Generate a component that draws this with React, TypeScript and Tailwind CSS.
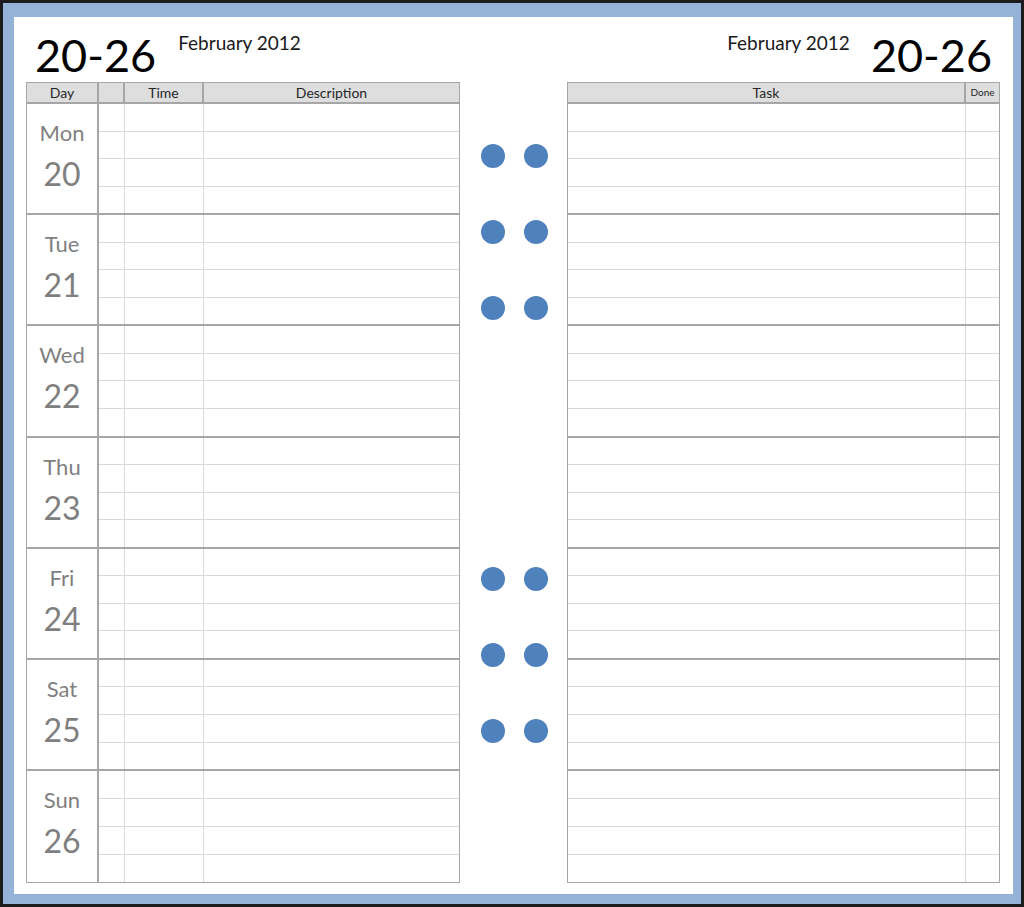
import React from 'react';

const days = [
  { name: 'Mon', num: '20' },
  { name: 'Tue', num: '21' },
  { name: 'Wed', num: '22' },
  { name: 'Thu', num: '23' },
  { name: 'Fri', num: '24' },
  { name: 'Sat', num: '25' },
  { name: 'Sun', num: '26' },
];

const font = { fontFamily: 'Lato, "Liberation Sans", sans-serif' };

function SubRows({ cols }: { cols: string }) {
  // 4 light lines per day block
  return (
    <div className="flex h-full flex-col">
      {[0, 1, 2, 3].map((i) => (
        <div
          key={i}
          className={`grid flex-1 ${cols} ${i < 3 ? 'border-b border-[#d9d9d9]' : ''}`}
        >
          <div className="border-r border-[#d9d9d9]" />
          <div className="border-r border-[#d9d9d9]" />
          <div />
        </div>
      ))}
    </div>
  );
}

function DayTable() {
  return (
    <div className="w-[434px] border border-[#a6a6a6]">
      <div className="grid h-[21px] grid-cols-[72px_26px_79px_1fr] border-b-2 border-[#a6a6a6] bg-[#dedede] text-[14px] leading-[19px] text-[#262626]">
        <div className="border-r-2 border-[#a6a6a6] text-center">Day</div>
        <div className="border-r-2 border-[#a6a6a6]" />
        <div className="border-r-2 border-[#a6a6a6] text-center">Time</div>
        <div className="text-center">Description</div>
      </div>
      {days.map((d, i) => (
        <div
          key={d.name}
          className={`flex h-[111.2px] ${i < days.length - 1 ? 'border-b-2 border-[#a6a6a6]' : ''}`}
        >
          <div className="flex w-[72px] flex-col items-center border-r-2 border-[#a6a6a6] pt-[16px] text-[#7f7f7f]">
            <div className="text-[22px] leading-[26px]">{d.name}</div>
            <div className="mt-[10px] text-[32px] leading-[36px]">{d.num}</div>
          </div>
          <div className="flex-1">
            <SubRows cols="grid-cols-[26px_79px_1fr]" />
          </div>
        </div>
      ))}
    </div>
  );
}

function TaskTable() {
  return (
    <div className="w-[433px] border border-[#a6a6a6]">
      <div className="grid h-[21px] grid-cols-[1fr_33px] border-b-2 border-[#a6a6a6] bg-[#dedede] leading-[19px] text-[#262626]">
        <div className="border-r-2 border-[#a6a6a6] text-center text-[14px]">Task</div>
        <div className="text-center text-[10px]">Done</div>
      </div>
      {days.map((d, i) => (
        <div
          key={d.name}
          className={`h-[111.2px] ${i < days.length - 1 ? 'border-b-2 border-[#a6a6a6]' : ''}`}
        >
          <div className="flex h-full flex-col">
            {[0, 1, 2, 3].map((j) => (
              <div
                key={j}
                className={`grid flex-1 grid-cols-[1fr_33px] ${j < 3 ? 'border-b border-[#d9d9d9]' : ''}`}
              >
                <div className="border-r border-[#d9d9d9]" />
                <div />
              </div>
            ))}
          </div>
        </div>
      ))}
    </div>
  );
}

function Dots() {
  return (
    <div className="flex gap-[19px]">
      <div className="h-[24px] w-[24px] rounded-full bg-[#4f81bd]" />
      <div className="h-[24px] w-[24px] rounded-full bg-[#4f81bd]" />
    </div>
  );
}

export default function App() {
  return (
    <div className="h-[907px] w-[1024px] bg-[#1c1c1c] p-[3px]" style={font}>
      <div className="h-full w-full bg-[#95b3d7] pb-[10px] pl-[11px] pr-[8px] pt-[14px]">
        <div className="h-full w-full bg-white pl-[12px] pr-[10px] pt-[16px]">
          <div className="flex h-[49px] items-start justify-between">
            <div className="flex items-start">
              <span className="ml-[9px] text-[45px] leading-[45px] text-black">20-26</span>
              <span className="ml-[22px] mt-[-2px] text-[19px] leading-[24px] text-[#1a1a1a]">
                February 2012
              </span>
            </div>
            <div className="flex items-start">
              <span className="mt-[-2px] text-[19px] leading-[24px] text-[#1a1a1a]">
                February 2012
              </span>
              <span className="ml-[21px] mr-[11px] text-[45px] leading-[45px] text-black">
                20-26
              </span>
            </div>
          </div>
          <div className="flex">
            <DayTable />
            <div className="flex w-[107px] flex-col items-center pl-[1px] pt-[62px]">
              <div className="flex flex-col gap-[52px]">
                <Dots />
                <Dots />
                <Dots />
              </div>
              <div className="mt-[247px] flex flex-col gap-[52px]">
                <Dots />
                <Dots />
                <Dots />
              </div>
            </div>
            <TaskTable />
          </div>
        </div>
      </div>
    </div>
  );
}
